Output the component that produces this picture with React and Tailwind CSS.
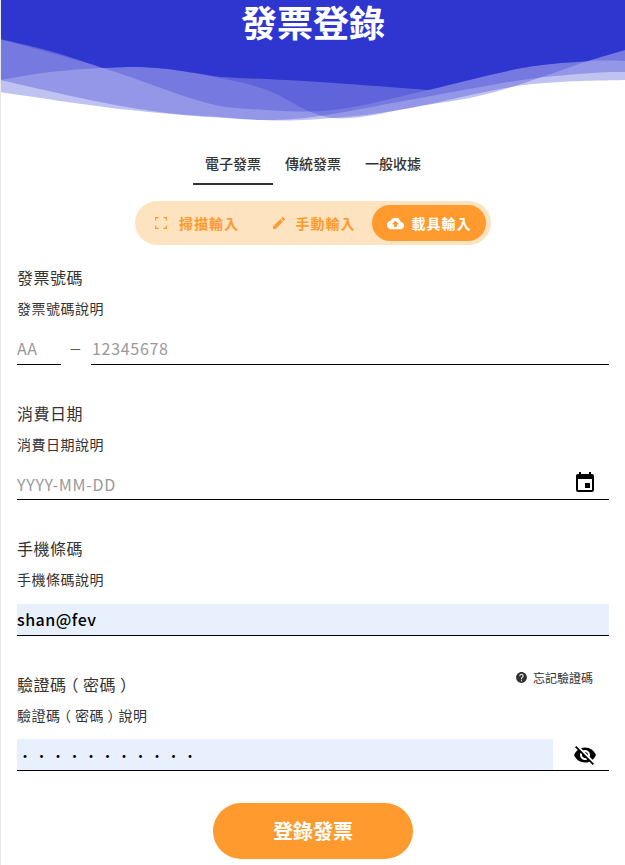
import { MdEdit, MdCloudUpload, MdEvent, MdVisibilityOff, MdHelp } from "react-icons/md";

// smooth line through the measured wave points
function curve(pts) {
  let d = `M${pts[0][0]} ${pts[0][1]}`;
  for (let i = 0; i < pts.length - 1; i++) {
    const p0 = pts[i - 1] || pts[i];
    const p1 = pts[i];
    const p2 = pts[i + 1];
    const p3 = pts[i + 2] || p2;
    const c1x = p1[0] + (p2[0] - p0[0]) / 6;
    const c1y = p1[1] + (p2[1] - p0[1]) / 6;
    const c2x = p2[0] - (p3[0] - p1[0]) / 6;
    const c2y = p2[1] - (p3[1] - p1[1]) / 6;
    d += ` C${c1x} ${c1y} ${c2x} ${c2y} ${p2[0]} ${p2[1]}`;
  }
  return d;
}

const closeTop = (pts) => `${curve(pts)} L625 0 L0 0 Z`;

const waveW = [[0, 92], [130, 110], [260, 120], [333, 118], [405, 109], [505, 88], [560, 82], [625, 80]];
const waveT = [[0, 80], [100, 102], [167, 113], [220, 117], [267, 120], [320, 116], [420, 98], [522, 80], [592, 73], [625, 72]];
const waveP = [[0, 39], [103, 68], [200, 101], [250, 109], [333, 110], [428, 90], [522, 68], [588, 61], [625, 61]];
const waveQ = [[0, 80], [50, 72], [103, 68], [133, 67], [167, 69], [220, 78], [267, 90], [333, 118], [420, 106], [495, 92], [591, 60], [625, 50]];

function Header() {
  const top =
    curve([[0, 39], [50, 51], [103, 68]]) +
    " " + curve([[103, 68], [133, 67], [167, 69], [220, 77]]).replace("M", "L") +
    " " + curve([[220, 77], [320, 82], [428, 90]]).replace("M", "L") +
    " " + curve([[428, 90], [522, 68], [588, 61]]).replace("M", "L") +
    " L591 60 L625 50 L625 0 L0 0 Z";

  return (
    <div className="relative h-[125px] pt-[3px]">
      <svg className="absolute top-0 left-[-1px]" width="625" height="125" viewBox="0 0 625 125">
        <path d={closeTop(waveW)} fill="#2f36d0" fillOpacity="0.3" />
        <path d={closeTop(waveT)} fill="#2f36d0" fillOpacity="0.3" />
        <path d={closeTop(waveP)} fill="#2f36d0" fillOpacity="0.3" />
        <path d={closeTop(waveQ)} fill="#2f36d0" fillOpacity="0.3" />
        <path d={top} fill="#2f36d0" />
      </svg>
      <h1 className="relative text-center text-[36px] leading-[36px] font-bold text-white">發票登錄</h1>
    </div>
  );
}

function ScanIcon() {
  return (
    <svg width="12" height="12" viewBox="0 0 12 12" fill="none" stroke="currentColor" strokeWidth="1.2">
      <path d="M.6 3.6V.6H3.6M8.4 .6H11.4V3.6M11.4 8.4V11.4H8.4M3.6 11.4H.6V8.4" />
    </svg>
  );
}

function Field({ label, hint, aside, children }) {
  return (
    <div className="mb-[37px]">
      <div className="flex h-[22px] justify-between pr-4">
        <label className="text-base leading-[22px] tracking-[0.5px]">{label}</label>
        {aside}
      </div>
      <p className="mt-[10px] mb-[14.5px] text-sm leading-5 tracking-[0.5px]">{hint}</p>
      {children}
    </div>
  );
}

// full-width brackets sit centred in their box in the reference
function CodeName() {
  return (
    <>
      驗證碼
      <span className="mx-[0.25em] [font-feature-settings:'halt']">（</span>
      密碼
      <span className="mx-[0.25em] [font-feature-settings:'halt']">）</span>
    </>
  );
}

export default function App() {
  const inputCls = "min-w-0 text-base tracking-[0.7px] outline-none placeholder:text-[#999]";

  return (
    <div
      lang="zh-TW"
      className="h-[865px] overflow-hidden border-l border-[#e8e8e8] bg-white text-[#333]"
      style={{ fontFamily: '"Noto Sans CJK TC", "Noto Sans", sans-serif' }}
    >
      <Header />

      <div className="mt-5 flex justify-center">
        <button className="h-10 w-20 border-b-2 border-[#333] pb-[2px] text-sm font-medium">電子發票</button>
        <button className="h-10 w-20 border-b-2 border-transparent pb-[2px] text-sm font-medium">傳統發票</button>
        <button className="h-10 w-20 border-b-2 border-transparent pb-[2px] text-sm font-medium">一般收據</button>
      </div>

      <div className="mx-auto mt-4 flex h-11 w-[356px] items-center gap-[2px] rounded-full bg-[#fde3bf] px-[5px] text-sm font-bold tracking-[1px] text-[#ff9a2e]">
        <button className="flex h-9 w-[114px] items-center justify-center gap-3">
          <ScanIcon />
          掃描輸入
        </button>
        <button className="flex h-9 w-[114px] items-center justify-center gap-[9px]">
          <MdEdit className="text-base" />
          手動輸入
        </button>
        <button className="flex h-9 w-[114px] items-center justify-center gap-2 rounded-full bg-[#ff9a2e] text-white">
          <MdCloudUpload className="text-[17px]" />
          載具輸入
        </button>
      </div>

      <form className="mt-[21px] pr-4 pl-4">
        <Field label="發票號碼" hint="發票號碼說明">
          <div className="flex items-center">
            <input placeholder="AA" className={`${inputCls} h-8 w-11 border-b border-black pb-px`} />
            <span className="w-[30px] pb-[2px] pl-[9px] text-xs leading-none text-[#333]">—</span>
            <input placeholder="12345678" className={`${inputCls} h-8 flex-1 border-b border-black pb-px pl-px`} />
          </div>
        </Field>

        <Field label="消費日期" hint="消費日期說明">
          <div className="flex items-center border-b border-black">
            <input placeholder="YYYY-MM-DD" className={`${inputCls} h-[31px] flex-1`} />
            <MdEvent className="mr-3 mb-[2px] text-2xl text-black" />
          </div>
        </Field>

        <Field label="手機條碼" hint="手機條碼說明">
          <input
            defaultValue="shan@fev"
            className="block h-8 w-full border-b border-black bg-[#e8f0fe] pb-px text-base font-medium tracking-[0.5px] text-black outline-none"
          />
        </Field>

        <Field
          label={<CodeName />}
          hint={
            <>
              <CodeName />
              說明
            </>
          }
          aside={
            <a className="mt-[-3px] flex h-4 items-center gap-[5px] text-xs">
              <MdHelp className="text-[13px]" />
              忘記驗證碼
            </a>
          }
        >
          <div className="flex items-center border-b border-black">
            <input
              type="password"
              defaultValue="12345678901"
              className="h-[31px] w-[536px] bg-[#e8f0fe] pl-px text-sm tracking-[2.5px] text-black outline-none"
            />
            <MdVisibilityOff className="ml-5 text-2xl text-black" />
          </div>
        </Field>
      </form>

      <button className="mx-auto -mt-[5px] block h-14 w-[200px] rounded-full bg-[#ff9a2e] text-xl font-bold text-white">
        登錄發票
      </button>
    </div>
  );
}
